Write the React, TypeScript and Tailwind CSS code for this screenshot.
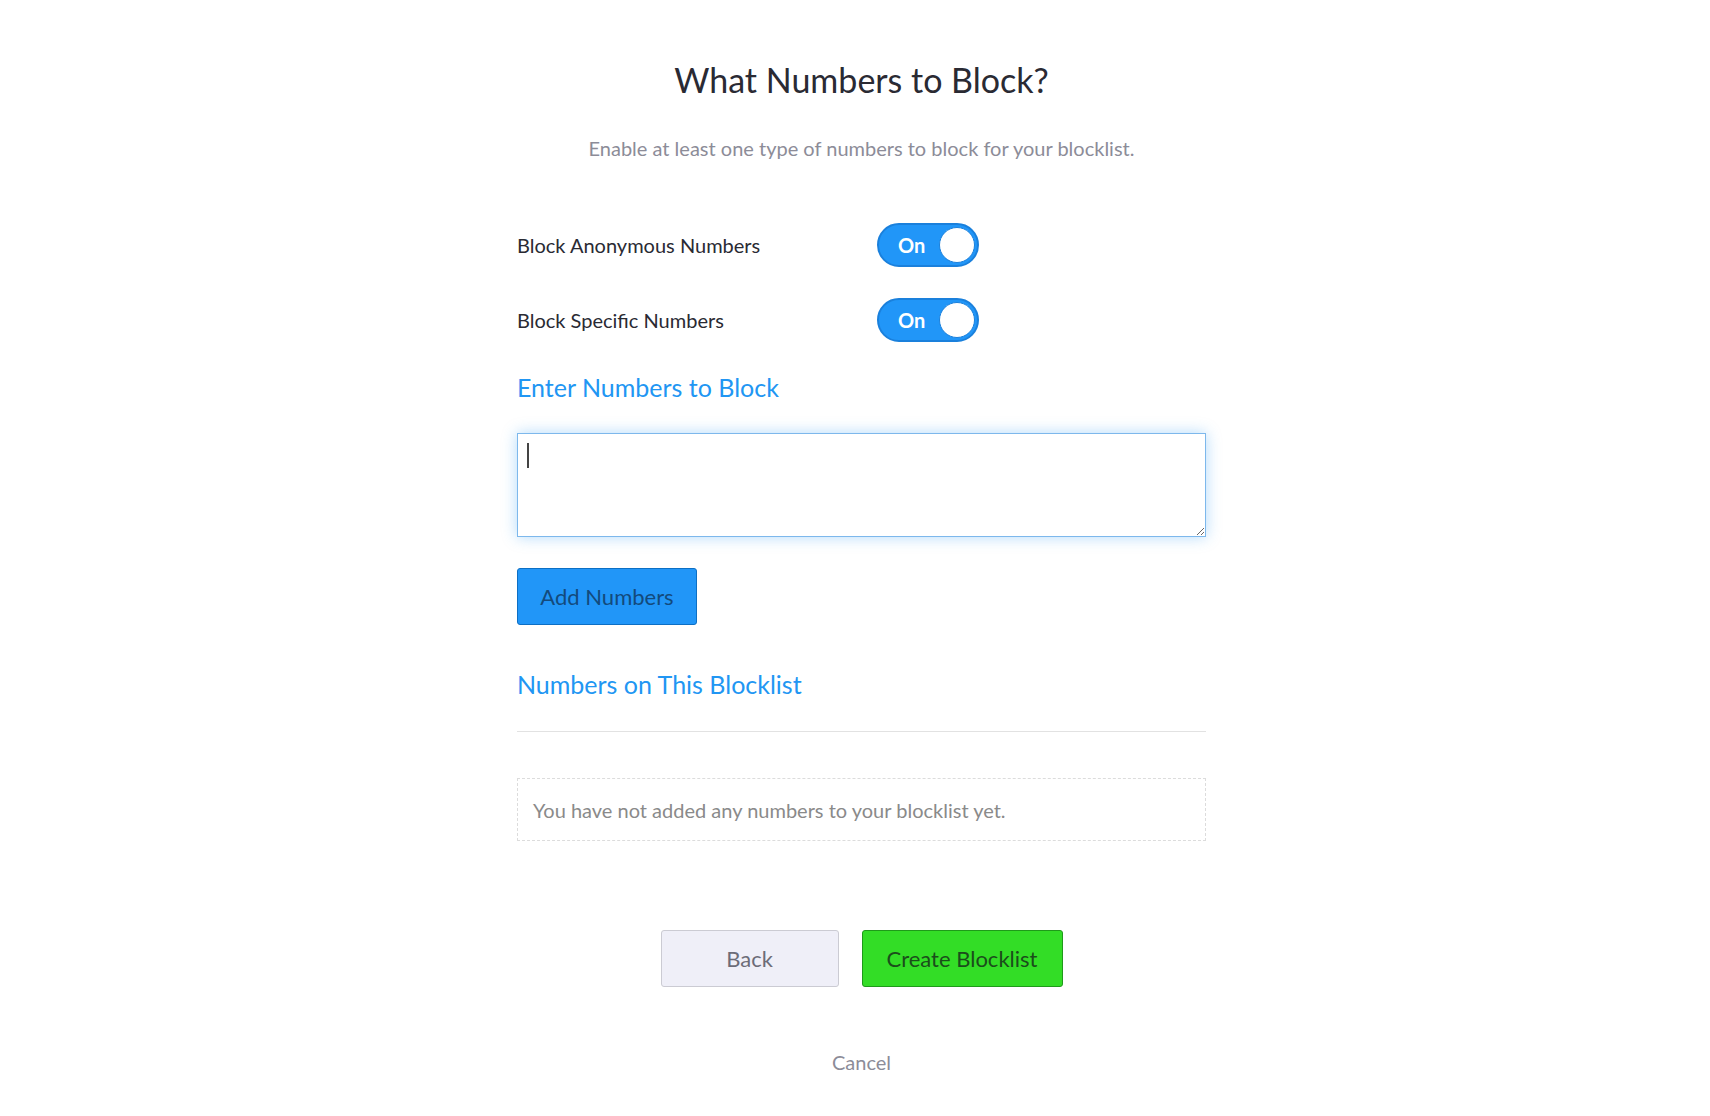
import { useState } from "react";

const Toggle = ({ on, onClick }: { on: boolean; onClick: () => void }) => {
  return (
    <button
      onClick={onClick}
      className={`relative flex h-[44px] w-[102px] items-center rounded-full border-2 ${
        on ? "border-[#1a80dc] bg-[#2196f8]" : "border-[#c9c9d3] bg-[#e4e4ec]"
      }`}
    >
      <span
        className={`absolute top-1/2 -translate-y-1/2 text-[20px] font-bold text-white ${
          on ? "left-[19px]" : "right-[16px] text-[#777]"
        }`}
      >
        {on ? "On" : "Off"}
      </span>
      <span
        className={`absolute top-[2px] h-[36px] w-[36px] rounded-full border border-[#1a80dc] bg-white ${
          on ? "right-[2px]" : "left-[2px]"
        }`}
      />
    </button>
  );
};

export default function App() {
  const [anon, setAnon] = useState(true);
  const [specific, setSpecific] = useState(true);
  const [numbers, setNumbers] = useState("");

  return (
    <div className="flex min-h-screen justify-center bg-white pl-[13px] font-['Source_Sans_Pro','Lato',sans-serif]">
      <div className="flex w-[689px] flex-col">
        {/* Title */}
        <h1 className="pt-[58px] text-center text-[34px] leading-[44px] text-[#2a2a33]">
          What Numbers to Block?
        </h1>
        <p className="mt-[32px] text-center text-[20px] leading-[28px] text-[#8c8c98]">
          Enable at least one type of numbers to block for your blocklist.
        </p>

        {/* Toggles */}
        <div className="mt-[61px] flex items-center">
          <span className="w-[360px] text-[20px] text-[#2a2a33]">Block Anonymous Numbers</span>
          <Toggle on={anon} onClick={() => setAnon(!anon)} />
        </div>
        <div className="mt-[31px] flex items-center">
          <span className="w-[360px] text-[20px] text-[#2a2a33]">Block Specific Numbers</span>
          <Toggle on={specific} onClick={() => setSpecific(!specific)} />
        </div>

        {/* Enter numbers */}
        <h2 className="mt-[29px] text-[25px] leading-[32px] text-[#2196f3]">Enter Numbers to Block</h2>
        <div className="relative mt-[30px]">
          <textarea
            value={numbers}
            onChange={(e) => setNumbers(e.target.value)}
            className="block h-[104px] w-full border border-[#7db8ec] px-[9px] py-[8px] text-[19px] text-[#333] shadow-[0_0_14px_rgba(33,150,243,0.35)] outline-none"
          />
          {numbers === "" && (
            <span className="pointer-events-none absolute left-[10px] top-[10px] h-[25px] w-[2px] bg-[#444]" />
          )}
        </div>
        <button className="mt-[31px] h-[57px] w-[180px] rounded-[3px] border border-[#0d6fc4] bg-[#2196f8] text-[22px] text-[#134a7c]">
          Add Numbers
        </button>

        {/* Current numbers */}
        <h2 className="mt-[43px] text-[25px] leading-[32px] text-[#2196f3]">Numbers on This Blocklist</h2>
        <div className="mt-[31px] border-t border-[#e2e2e2]" />
        <div className="mt-[46px] flex h-[63px] items-center border border-dashed border-[#dcdcdc] px-[15px] text-[20px] text-[#8a8a8a]">
          You have not added any numbers to your blocklist yet.
        </div>

        {/* Actions */}
        <div className="mt-[89px] flex justify-center gap-[23px]">
          <button className="h-[57px] w-[178px] rounded-[3px] border border-[#cbcbd3] bg-[#efeff8] text-[22px] text-[#6c6c78]">
            Back
          </button>
          <button className="h-[57px] w-[201px] rounded-[3px] border border-[#1f9a1a] bg-[#33dd26] text-[22px] text-[#1b4d1b]">
            Create Blocklist
          </button>
        </div>
        <button className="mt-[61px] self-center text-[20px] leading-[28px] text-[#8c8c98]">Cancel</button>
      </div>
    </div>
  );
}
